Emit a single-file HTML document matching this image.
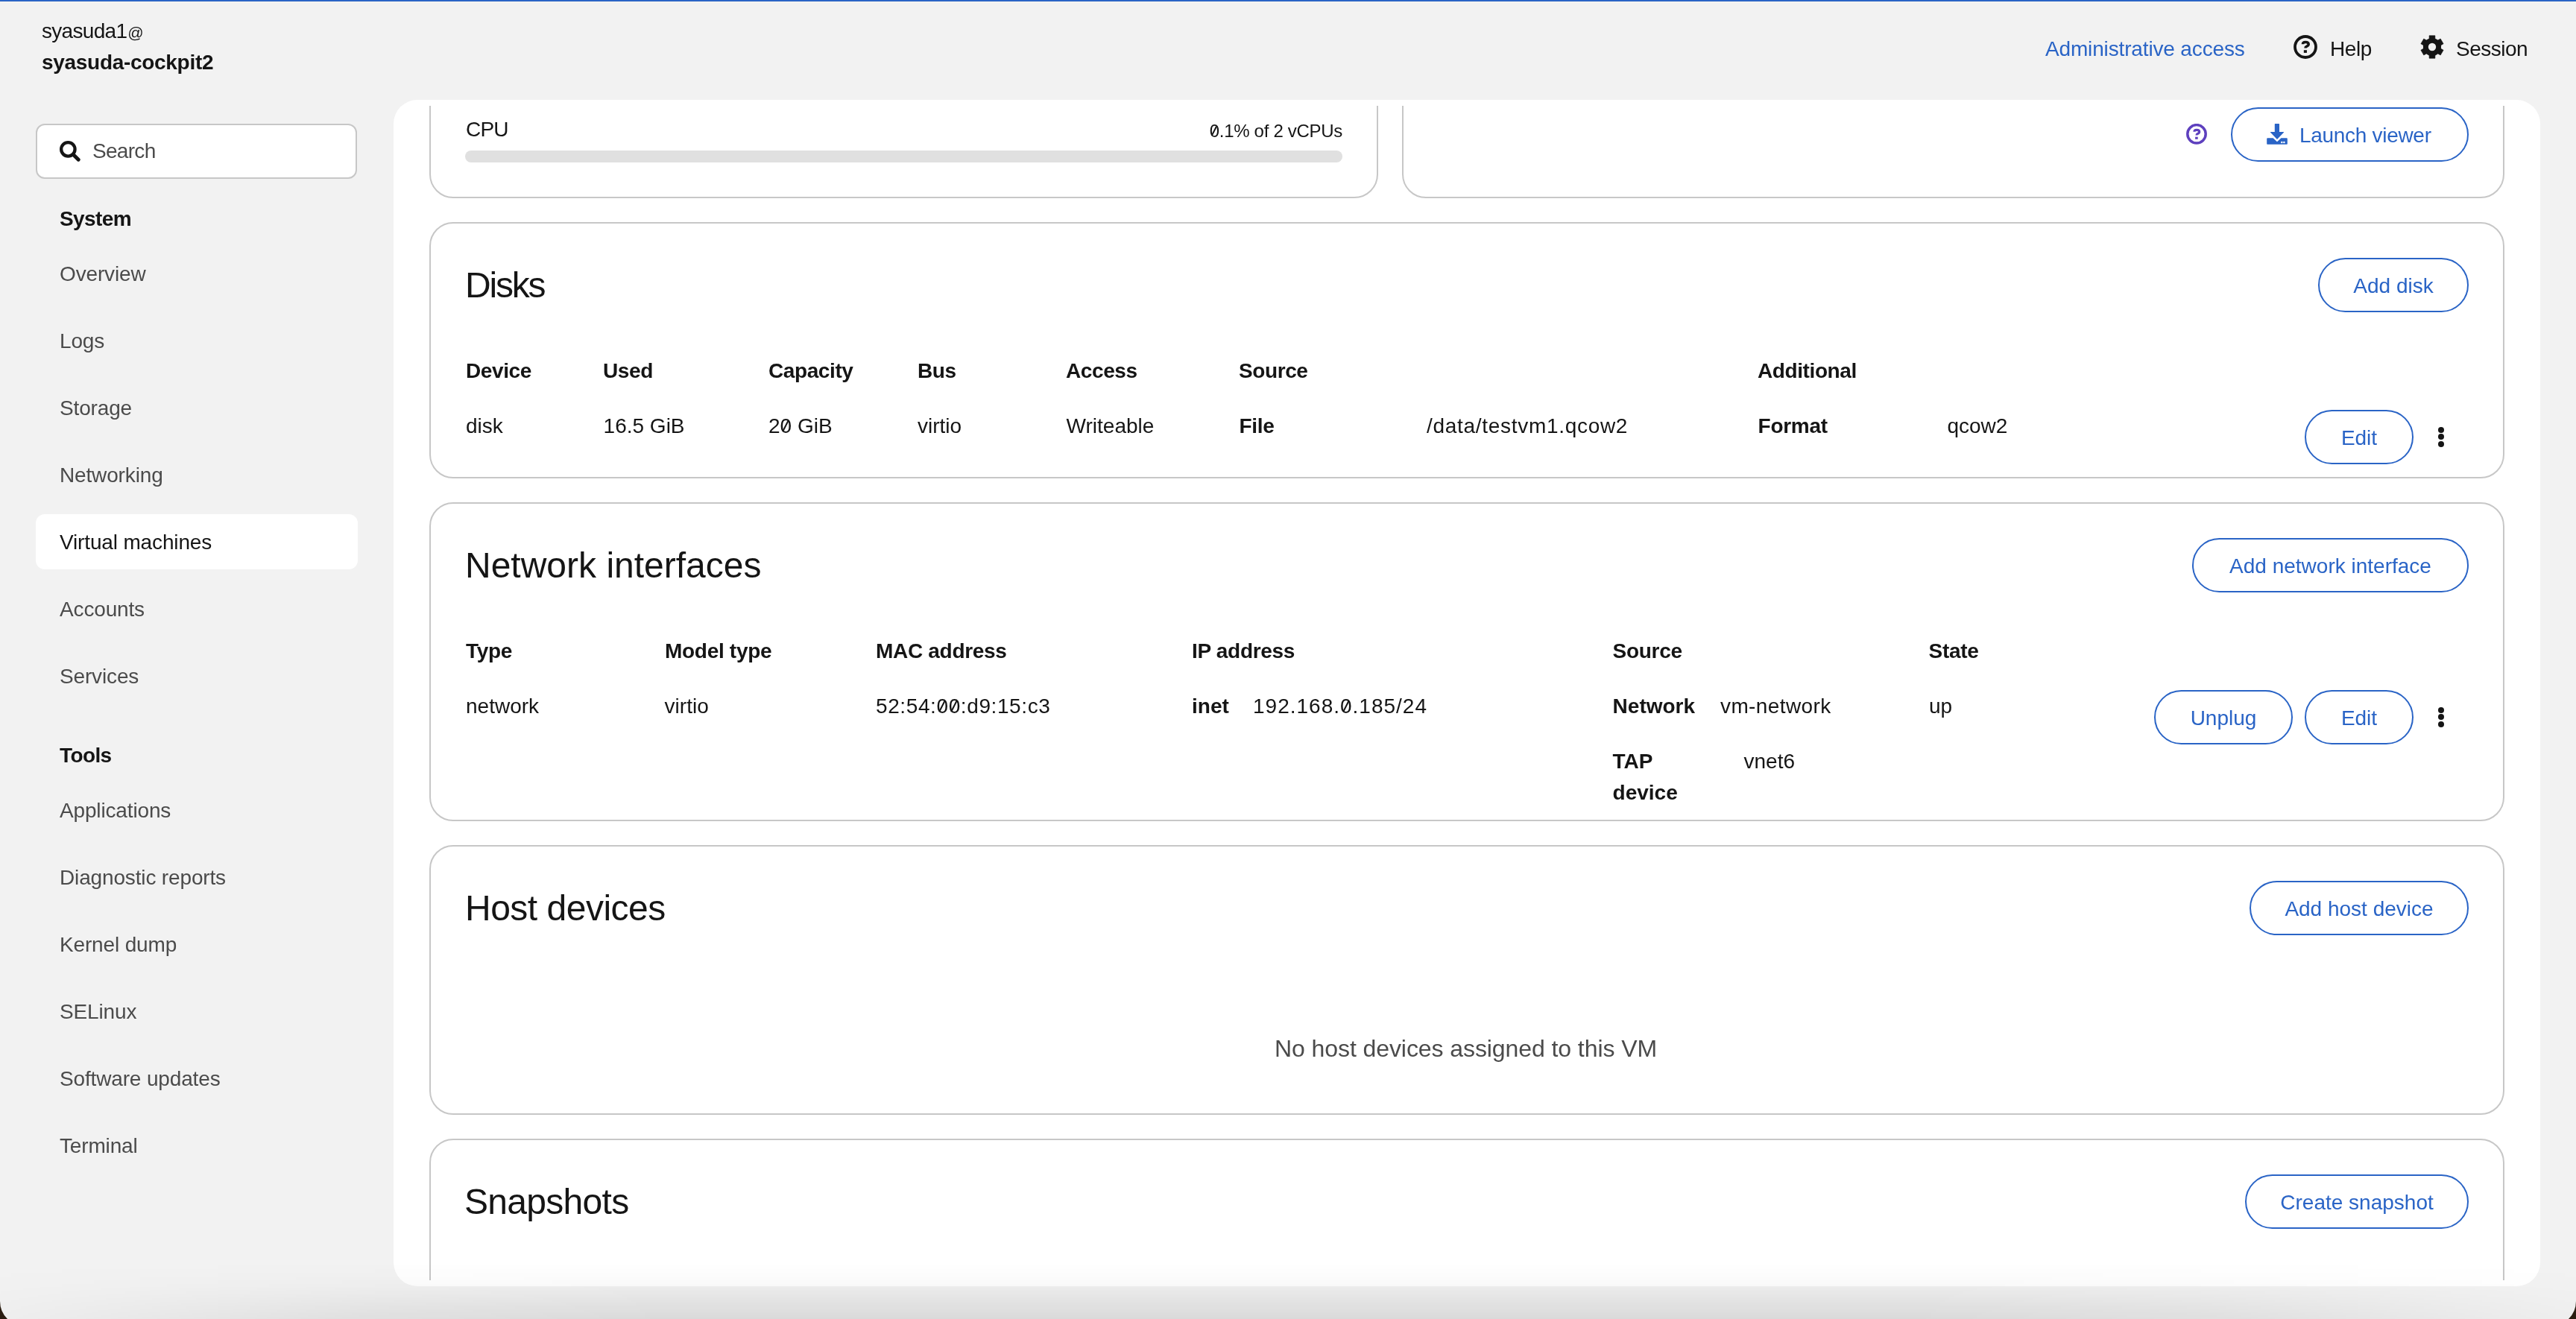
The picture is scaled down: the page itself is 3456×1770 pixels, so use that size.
<!DOCTYPE html>
<html><head><meta charset="utf-8"><title>Cockpit</title>
<style>
html,body{margin:0;padding:0;}
body{width:3456px;height:1770px;overflow:hidden;background:#f2f2f2;position:relative;font-family:"Liberation Sans",sans-serif;color:#151515;}
.a{position:absolute;}
.t{position:absolute;white-space:nowrap;}
.z{position:relative;}
.z::after{content:'';position:absolute;left:46%;top:26%;width:2.2px;height:50%;background:currentColor;transform:translateX(-50%) rotate(27deg);}
</style></head><body><div id="root" style="position:absolute;left:0;top:0;width:3456px;height:1770px;will-change:transform;">
<div class="a" style="left:0px;top:0px;width:3456px;height:2px;background:#2a64c6;"></div>
<div class="a" style="left:0px;top:2px;width:3456px;height:1px;background:#faf8f0;"></div>
<div class="t" style="left:56px;top:28.0px;font-size:28px;line-height:28px;letter-spacing:-0.7px;">syasuda1<span style="font-size:21px;margin-left:1px">@</span></div>
<div class="t" style="left:56px;top:70.0px;font-size:28px;line-height:28px;font-weight:700;letter-spacing:-0.3px;">syasuda-cockpit2</div>
<div class="t" style="left:2744px;top:52.0px;font-size:28px;line-height:28px;color:#2a64c6;letter-spacing:-0.15px;">Administrative access</div>
<svg class="a" style="left:3077px;top:47px" width="32" height="32" viewBox="0 0 28 28"><circle cx="14" cy="14" r="12.25" fill="none" stroke="#151515" stroke-width="3.3"/><path d="M10.9 10.8 C10.9 8.6 12.4 8.4 14 8.4 C15.9 8.4 17.7 9.2 17.7 11 C17.7 12.6 16.2 13.1 15 13.6 C14.2 13.9 14 14.4 14 15.4" fill="none" stroke="#151515" stroke-width="3.1"/><rect x="12.1" y="17.7" width="3.6" height="3.2" fill="#151515"/></svg>
<div class="t" style="left:3126px;top:52.0px;font-size:28px;line-height:28px;letter-spacing:-0.4px;">Help</div>
<svg class="a" style="left:3247px;top:47px" width="32" height="32" viewBox="0 0 32 32"><polygon points="19.90,26.00 19.90,31.20 12.10,31.20 12.10,26.00 9.29,24.38 4.79,26.98 0.89,20.22 5.39,17.62 5.39,14.38 0.89,11.78 4.79,5.02 9.29,7.62 12.10,6.00 12.10,0.80 19.90,0.80 19.90,6.00 22.71,7.62 27.21,5.02 31.11,11.78 26.61,14.38 26.61,17.62 31.11,20.22 27.21,26.98 22.71,24.38" fill="#151515" stroke="#151515" stroke-width="0.6" stroke-linejoin="round"/><circle cx="16" cy="16" r="12.1" fill="#151515"/><circle cx="16" cy="16" r="5.2" fill="#f2f2f2"/></svg>
<div class="t" style="left:3295px;top:52.0px;font-size:28px;line-height:28px;letter-spacing:-0.5px;">Session</div>
<div class="a" style="left:48px;top:166px;width:431px;height:74px;background:#fff;border:2px solid #c7c7c7;border-radius:12px;box-sizing:border-box;"></div>
<svg class="a" style="left:80px;top:189px" width="28" height="28" viewBox="0 0 28 28"><circle cx="11.35" cy="11.35" r="9.2" fill="none" stroke="#151515" stroke-width="4.3"/><path d="M18.4 18.4 L25.2 25.2" stroke="#151515" stroke-width="4.9" stroke-linecap="round"/></svg>
<div class="t" style="left:124px;top:189.0px;font-size:28px;line-height:28px;color:#4b4b4b;letter-spacing:-0.7px;">Search</div>
<div class="t" style="left:80px;top:280.0px;font-size:28px;line-height:28px;font-weight:700;letter-spacing:-0.6px;">System</div>
<div class="a" style="left:48px;top:690px;width:432px;height:74px;background:#fff;border-radius:12px;"></div>
<div class="t" style="left:80px;top:354.0px;font-size:28px;line-height:28px;color:#4b4b4b;letter-spacing:-0.15px;">Overview</div>
<div class="t" style="left:80px;top:444.0px;font-size:28px;line-height:28px;color:#4b4b4b;letter-spacing:-0.15px;">Logs</div>
<div class="t" style="left:80px;top:534.0px;font-size:28px;line-height:28px;color:#4b4b4b;letter-spacing:-0.15px;">Storage</div>
<div class="t" style="left:80px;top:624.0px;font-size:28px;line-height:28px;color:#4b4b4b;letter-spacing:-0.15px;">Networking</div>
<div class="t" style="left:80px;top:714.0px;font-size:28px;line-height:28px;letter-spacing:-0.15px;">Virtual machines</div>
<div class="t" style="left:80px;top:804.0px;font-size:28px;line-height:28px;color:#4b4b4b;letter-spacing:-0.15px;">Accounts</div>
<div class="t" style="left:80px;top:894.0px;font-size:28px;line-height:28px;color:#4b4b4b;letter-spacing:-0.15px;">Services</div>
<div class="t" style="left:80px;top:1000.0px;font-size:28px;line-height:28px;font-weight:700;letter-spacing:-0.6px;">Tools</div>
<div class="t" style="left:80px;top:1074.0px;font-size:28px;line-height:28px;color:#4b4b4b;letter-spacing:-0.15px;">Applications</div>
<div class="t" style="left:80px;top:1164.0px;font-size:28px;line-height:28px;color:#4b4b4b;letter-spacing:-0.15px;">Diagnostic reports</div>
<div class="t" style="left:80px;top:1254.0px;font-size:28px;line-height:28px;color:#4b4b4b;letter-spacing:-0.15px;">Kernel dump</div>
<div class="t" style="left:80px;top:1344.0px;font-size:28px;line-height:28px;color:#4b4b4b;letter-spacing:-0.15px;">SELinux</div>
<div class="t" style="left:80px;top:1434.0px;font-size:28px;line-height:28px;color:#4b4b4b;letter-spacing:-0.15px;">Software updates</div>
<div class="t" style="left:80px;top:1524.0px;font-size:28px;line-height:28px;color:#4b4b4b;letter-spacing:-0.15px;">Terminal</div>
<div class="a" style="left:528px;top:134px;width:2880px;height:1592px;background:#fff;border-radius:32px;"></div>
<div class="a" style="left:528px;top:142px;width:2880px;height:1576px;overflow:hidden">
<div class="a" style="left:48px;top:-82px;width:1273px;height:206px;border:2px solid #c7c7c7;border-radius:32px;box-sizing:border-box;background:#fff;"></div>
<div class="t" style="left:97px;top:18.0px;font-size:28px;line-height:28px;letter-spacing:-0.8px;">CPU</div>
<div class="a" style="left:96px;top:60px;width:1177px;height:16px;background:#e0e0e0;border-radius:8px;"></div>
<div class="t" style="left:672px;width:601px;text-align:right;top:22px;font-size:24px;line-height:24px;letter-spacing:-0.3px"><span class="z">0</span>.1% of 2 vCPUs</div>
<div class="a" style="left:1353px;top:-82px;width:1479px;height:206px;border:2px solid #c7c7c7;border-radius:32px;box-sizing:border-box;background:#fff;"></div>
<svg class="a" style="left:2405px;top:24px" width="28" height="28" viewBox="0 0 28 28"><circle cx="14" cy="13.8" r="12.2" fill="none" stroke="#5e40be" stroke-width="3.5"/><path d="M10.9 10.8 C10.9 8.6 12.4 8.4 14 8.4 C15.9 8.4 17.7 9.2 17.7 11 C17.7 12.6 16.2 13.1 15 13.6 C14.2 13.9 14 14.4 14 15.4" fill="none" stroke="#5e40be" stroke-width="3.1"/><rect x="12.1" y="17.7" width="3.6" height="3.1" fill="#5e40be"/></svg>
<div class="a" style="left:2465px;top:2px;width:319px;height:73px;border:2px solid #2a64c6;border-radius:999px;box-sizing:border-box;"></div>
<svg class="a" style="left:2513px;top:24px" width="28" height="28" viewBox="0 0 28 28"><path d="M0.2 20.3 Q0.2 19.3 1.2 19.3 H8.6 L14 24.2 L19.4 19.3 H26.8 Q27.8 19.3 27.8 20.3 V26.9 Q27.8 27.7 27 27.7 H1 Q0.2 27.7 0.2 26.9 Z" fill="#2a64c6"/><path d="M10.8 0.6 Q10.8 0 11.4 0 H16.4 Q17 0 17 0.6 V10.9 H22.6 Q23.5 11 22.9 11.7 L14 21 L5.1 11.7 Q4.5 11 5.4 10.9 H10.8 Z" fill="#2a64c6"/><circle cx="20.3" cy="25.1" r="1.25" fill="#fff"/><circle cx="23.4" cy="25.1" r="1.25" fill="#fff"/></svg>
<div class="t" style="left:2557px;top:26.0px;font-size:28px;line-height:28px;color:#2a64c6;letter-spacing:-0.3px;">Launch viewer</div>
<div class="a" style="left:48px;top:156px;width:2784px;height:344px;border:2px solid #c7c7c7;border-radius:32px;box-sizing:border-box;background:#fff;"></div>
<div class="t" style="left:96px;top:217.0px;font-size:48px;line-height:48px;letter-spacing:-2.2px;">Disks</div>
<div class="a" style="left:2582px;top:204px;width:202px;height:73px;border:2px solid #2a64c6;border-radius:999px;box-sizing:border-box;"></div>
<div class="t" style="left:2083.0px;width:1200px;text-align:center;top:228.0px;font-size:28px;line-height:28px;color:#2a64c6;">Add disk</div>
<div class="t" style="left:97px;top:342.0px;font-size:28px;line-height:28px;font-weight:700;letter-spacing:-0.4px;">Device</div>
<div class="t" style="left:281px;top:342.0px;font-size:28px;line-height:28px;font-weight:700;letter-spacing:-0.4px;">Used</div>
<div class="t" style="left:503px;top:342.0px;font-size:28px;line-height:28px;font-weight:700;letter-spacing:-0.4px;">Capacity</div>
<div class="t" style="left:703px;top:342.0px;font-size:28px;line-height:28px;font-weight:700;letter-spacing:-0.4px;">Bus</div>
<div class="t" style="left:902px;top:342.0px;font-size:28px;line-height:28px;font-weight:700;letter-spacing:-0.4px;">Access</div>
<div class="t" style="left:1134px;top:342.0px;font-size:28px;line-height:28px;font-weight:700;letter-spacing:-0.4px;">Source</div>
<div class="t" style="left:1830px;top:342.0px;font-size:28px;line-height:28px;font-weight:700;letter-spacing:-0.4px;">Additional</div>
<div class="t" style="left:97px;top:416.0px;font-size:28px;line-height:28px;letter-spacing:0px;">disk</div>
<div class="t" style="left:281.6px;top:416.0px;font-size:28px;line-height:28px;letter-spacing:0px;">16.5 GiB</div>
<div class="t" style="left:503px;top:416.0px;font-size:28px;line-height:28px;letter-spacing:0px;">2<span class="z">0</span> GiB</div>
<div class="t" style="left:703px;top:416.0px;font-size:28px;line-height:28px;letter-spacing:0px;">virtio</div>
<div class="t" style="left:902.5999999999999px;top:416.0px;font-size:28px;line-height:28px;letter-spacing:0px;">Writeable</div>
<div class="t" style="left:1134.4px;top:416.0px;font-size:28px;line-height:28px;font-weight:700;letter-spacing:-0.3px;">File</div>
<div class="t" style="left:1386px;top:416.0px;font-size:28px;line-height:28px;letter-spacing:0.7px;">/data/testvm1.qcow2</div>
<div class="t" style="left:1830.6px;top:416.0px;font-size:28px;line-height:28px;font-weight:700;letter-spacing:-0.3px;">Format</div>
<div class="t" style="left:2084.4px;top:416.0px;font-size:28px;line-height:28px;letter-spacing:0px;">qcow2</div>
<div class="a" style="left:2564px;top:408px;width:146px;height:73px;border:2px solid #2a64c6;border-radius:999px;box-sizing:border-box;"></div>
<div class="t" style="left:2037.0px;width:1200px;text-align:center;top:432.0px;font-size:28px;line-height:28px;color:#2a64c6;">Edit</div>
<div class="a" style="left:2743.0px;top:430.5px;width:8px;height:8px;border-radius:50%;background:#151515"></div>
<div class="a" style="left:2743.0px;top:440.0px;width:8px;height:8px;border-radius:50%;background:#151515"></div>
<div class="a" style="left:2743.0px;top:449.5px;width:8px;height:8px;border-radius:50%;background:#151515"></div>
<div class="a" style="left:48px;top:532px;width:2784px;height:428px;border:2px solid #c7c7c7;border-radius:32px;box-sizing:border-box;background:#fff;"></div>
<div class="t" style="left:96px;top:593.0px;font-size:48px;line-height:48px;letter-spacing:0px;">Network interfaces</div>
<div class="a" style="left:2413px;top:580px;width:371px;height:73px;border:2px solid #2a64c6;border-radius:999px;box-sizing:border-box;"></div>
<div class="t" style="left:1998.5px;width:1200px;text-align:center;top:604.0px;font-size:28px;line-height:28px;color:#2a64c6;">Add network interface</div>
<div class="t" style="left:97px;top:718.0px;font-size:28px;line-height:28px;font-weight:700;letter-spacing:-0.3px;">Type</div>
<div class="t" style="left:364px;top:718.0px;font-size:28px;line-height:28px;font-weight:700;letter-spacing:-0.3px;">Model type</div>
<div class="t" style="left:647px;top:718.0px;font-size:28px;line-height:28px;font-weight:700;letter-spacing:-0.3px;">MAC address</div>
<div class="t" style="left:1071px;top:718.0px;font-size:28px;line-height:28px;font-weight:700;letter-spacing:-0.3px;">IP address</div>
<div class="t" style="left:1635.6px;top:718.0px;font-size:28px;line-height:28px;font-weight:700;letter-spacing:-0.3px;">Source</div>
<div class="t" style="left:2059.5px;top:718.0px;font-size:28px;line-height:28px;font-weight:700;letter-spacing:-0.3px;">State</div>
<div class="t" style="left:97px;top:792.0px;font-size:28px;line-height:28px;letter-spacing:0px;">network</div>
<div class="t" style="left:363.6px;top:792.0px;font-size:28px;line-height:28px;letter-spacing:0px;">virtio</div>
<div class="t" style="left:647px;top:792.0px;font-size:28px;line-height:28px;letter-spacing:0.6px;">52:54:<span class="z">0</span><span class="z">0</span>:d9:15:c3</div>
<div class="t" style="left:1071px;top:792.0px;font-size:28px;line-height:28px;font-weight:700;letter-spacing:0px;">inet</div>
<div class="t" style="left:1153px;top:792.0px;font-size:28px;line-height:28px;letter-spacing:1.0px;">192.168.<span class="z">0</span>.185/24</div>
<div class="t" style="left:1635.6px;top:792.0px;font-size:28px;line-height:28px;font-weight:700;letter-spacing:0px;">Network</div>
<div class="t" style="left:1780px;top:792.0px;font-size:28px;line-height:28px;letter-spacing:0.4px;">vm-network</div>
<div class="t" style="left:2060px;top:792.0px;font-size:28px;line-height:28px;letter-spacing:0px;">up</div>
<div class="t" style="left:1635.6px;top:866.0px;font-size:28px;line-height:28px;font-weight:700;">TAP</div>
<div class="t" style="left:1635.6px;top:908.0px;font-size:28px;line-height:28px;font-weight:700;">device</div>
<div class="t" style="left:1811.5px;top:866.0px;font-size:28px;line-height:28px;">vnet6</div>
<div class="a" style="left:2362px;top:784px;width:186px;height:73px;border:2px solid #2a64c6;border-radius:999px;box-sizing:border-box;"></div>
<div class="t" style="left:1855.0px;width:1200px;text-align:center;top:808.0px;font-size:28px;line-height:28px;color:#2a64c6;">Unplug</div>
<div class="a" style="left:2564px;top:784px;width:146px;height:73px;border:2px solid #2a64c6;border-radius:999px;box-sizing:border-box;"></div>
<div class="t" style="left:2037.0px;width:1200px;text-align:center;top:808.0px;font-size:28px;line-height:28px;color:#2a64c6;">Edit</div>
<div class="a" style="left:2743.0px;top:806.5px;width:8px;height:8px;border-radius:50%;background:#151515"></div>
<div class="a" style="left:2743.0px;top:816.0px;width:8px;height:8px;border-radius:50%;background:#151515"></div>
<div class="a" style="left:2743.0px;top:825.5px;width:8px;height:8px;border-radius:50%;background:#151515"></div>
<div class="a" style="left:48px;top:992px;width:2784px;height:362px;border:2px solid #c7c7c7;border-radius:32px;box-sizing:border-box;background:#fff;"></div>
<div class="t" style="left:96px;top:1053.0px;font-size:48px;line-height:48px;letter-spacing:-0.5px;">Host devices</div>
<div class="a" style="left:2490px;top:1040px;width:294px;height:73px;border:2px solid #2a64c6;border-radius:999px;box-sizing:border-box;"></div>
<div class="t" style="left:2037.0px;width:1200px;text-align:center;top:1064.0px;font-size:28px;line-height:28px;color:#2a64c6;">Add host device</div>
<div class="t" style="left:838.5px;width:1200px;text-align:center;top:1249.0px;font-size:32px;line-height:32px;color:#4b4b4b;letter-spacing:-0.08px;">No host devices assigned to this VM</div>
<div class="a" style="left:48px;top:1386px;width:2784px;height:372px;border:2px solid #c7c7c7;border-radius:32px;box-sizing:border-box;background:#fff;"></div>
<div class="t" style="left:95px;top:1447.0px;font-size:48px;line-height:48px;letter-spacing:-0.7px;">Snapshots</div>
<div class="a" style="left:2484px;top:1434px;width:300px;height:73px;border:2px solid #2a64c6;border-radius:999px;box-sizing:border-box;"></div>
<div class="t" style="left:2034.0px;width:1200px;text-align:center;top:1458.0px;font-size:28px;line-height:28px;color:#2a64c6;">Create snapshot</div>
</div>
<div class="a" style="left:0px;top:1696px;width:3456px;height:74px;background:linear-gradient(to bottom, rgba(0,0,0,0) 0%, rgba(0,0,0,0.025) 40%, rgba(0,0,0,0.1) 100%);-webkit-mask-image:linear-gradient(to right, rgba(0,0,0,0.15) 0px, rgba(0,0,0,0.75) 500px, #000 900px, #000 2556px, rgba(0,0,0,0.75) 2956px, rgba(0,0,0,0.15) 3456px);mask-image:linear-gradient(to right, rgba(0,0,0,0.15) 0px, rgba(0,0,0,0.75) 500px, #000 900px, #000 2556px, rgba(0,0,0,0.75) 2956px, rgba(0,0,0,0.15) 3456px);"></div>
<svg class="a" style="left:0;top:1740px" width="3456" height="30" viewBox="0 1740 3456 30"><path d="M0 1746 A33.8 33.8 0 0 0 10 1770 H0 Z" fill="#2a1c10"/><path d="M3456 1746 A33.8 33.8 0 0 1 3446 1770 H3456 Z" fill="#2a1c10"/></svg>
</div></body></html>
